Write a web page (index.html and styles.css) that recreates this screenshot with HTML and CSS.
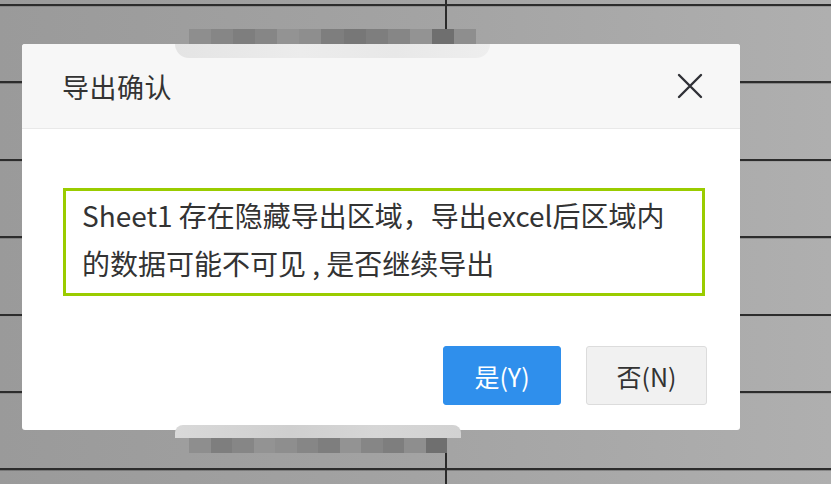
FILE: index.html
```html
<!DOCTYPE html>
<html lang="zh-CN">
<head>
<meta charset="utf-8">
<title>导出确认</title>
<link rel="stylesheet" href="styles.css">
</head>
<body>
<div class="sheet">
  <div class="dialog">
    <div class="dialog-header">
      <span class="dialog-title">导出确认</span>
      <button class="close-btn" aria-label="关闭">
        <svg width="26" height="26" viewBox="0 0 26 26"><path d="M2 2 L24 24 M24 2 L2 24" stroke="#2f3036" stroke-width="2.4" stroke-linecap="round" fill="none"/></svg>
      </button>
    </div>
    <div class="dialog-body">
      <div class="message">Sheet1 存在隐藏导出区域，导出excel后区域内<br>的数据可能不可见 , 是否继续导出</div>
    </div>
    <div class="dialog-footer">
      <button class="btn btn-primary">是(Y)</button>
      <button class="btn btn-default">否(N)</button>
    </div>
  </div>
  <div class="mosaic mosaic-top">
    <div class="mosaic-dark">
      <i class="c1"></i><i class="c2"></i><i class="c3"></i><i class="c2"></i><i class="c4"></i><i class="c1"></i><i class="c3"></i><i class="c5"></i><i class="c3"></i><i class="c2"></i><i class="c4"></i><i class="c6"></i><i class="c1"></i>
    </div>
    <div class="mosaic-light"></div>
  </div>
  <div class="mosaic mosaic-bottom">
    <div class="mosaic-light"></div>
    <div class="mosaic-dark">
      <i class="c1"></i><i class="c3"></i><i class="c2"></i><i class="c4"></i><i class="c1"></i><i class="c2"></i><i class="c3"></i><i class="c4"></i><i class="c2"></i><i class="c3"></i><i class="c1"></i><i class="c6"></i>
    </div>
  </div>
</div>
</body>
</html>
```
FILE: styles.css
```css
html, body {
  margin: 0;
  padding: 0;
}
body {
  width: 831px;
  height: 484px;
  overflow: hidden;
  font-family: "Noto Sans CJK SC", "Noto Sans", sans-serif;
}
.sheet {
  position: relative;
  width: 831px;
  height: 484px;
  box-sizing: border-box;
  padding: 44px 0 0 22px;
  background:
    linear-gradient(90deg, transparent 445px, #2a2a2a 445px, #2a2a2a 447px, transparent 447px),
    repeating-linear-gradient(180deg, #2c2c2c 0, #2c2c2c 2px, rgba(0,0,0,0.25) 2px, transparent 3px, transparent 77.4px),
    linear-gradient(90deg, #9a9a9a 0%, #a3a3a3 50%, #afafaf 100%);
  background-position: 0 0, 0 4px, 0 0;
}
.dialog {
  width: 718px;
  height: 386px;
  background: #ffffff;
  border-radius: 3px;
  display: flex;
  flex-direction: column;
  overflow: hidden;
}
.dialog-header {
  height: 85px;
  box-sizing: border-box;
  background: #f7f7f7;
  border-bottom: 1px solid #e9e9e9;
  display: flex;
  align-items: center;
  justify-content: space-between;
  padding: 0 37px 0 40px;
}
.dialog-title {
  font-size: 27px;
  color: #333333;
  letter-spacing: 0.5px;
}
.close-btn {
  border: 0;
  background: transparent;
  padding: 0;
  width: 26px;
  height: 26px;
  display: flex;
}
.dialog-body {
  padding: 59px 35px 0 41px;
}
.message {
  border: 3px solid #9acc00;
  height: 102px;
  padding: 0 0 0 16px;
  font-size: 28px;
  line-height: 48px;
  color: #333333;
  white-space: nowrap;
}
.dialog-footer {
  display: flex;
  justify-content: flex-end;
  gap: 25px;
  padding: 50px 33px 0 0;
}
.btn {
  height: 59px;
  border-radius: 3px;
  font-family: "Noto Sans CJK SC", "Noto Sans", sans-serif;
  font-size: 25px;
  padding: 0;
  display: flex;
  align-items: center;
  justify-content: center;
}
.btn-primary {
  width: 118px;
  background: #2f8fec;
  border: 1px solid #2f8fec;
  color: #ffffff;
}
.btn-default {
  width: 121px;
  background: #f1f1f1;
  border: 1px solid #dcdcdc;
  color: #333333;
}
.mosaic {
  position: absolute;
  display: flex;
  flex-direction: column;
}
.mosaic-top {
  left: 175px;
  top: 29px;
  width: 315px;
}
.mosaic-bottom {
  left: 175px;
  top: 425px;
  width: 286px;
}
.mosaic-dark {
  display: flex;
  height: 15px;
  margin: 0 14px 0 14px;
}
.mosaic-dark i {
  flex: 1;
  display: block;
}
.mosaic-light {
  height: 14px;
  background: linear-gradient(90deg, #e4e4e4, #ececec 40%, #e8e8e8 70%, #eeeeee);
}
.mosaic-top .mosaic-light {
  border-radius: 0 0 14px 14px;
}
.mosaic-bottom .mosaic-light {
  height: 13px;
  border-radius: 8px 8px 0 0;
  background: linear-gradient(90deg, #d9d9d9, #cfcfcf 40%, #d6d6d6 70%, #d2d2d2);
}
.c1 { background: #8e8e8e; }
.c2 { background: #868686; }
.c3 { background: #7e7e7e; }
.c4 { background: #939393; }
.c5 { background: #777777; }
.c6 { background: #6f6f6f; }
```
